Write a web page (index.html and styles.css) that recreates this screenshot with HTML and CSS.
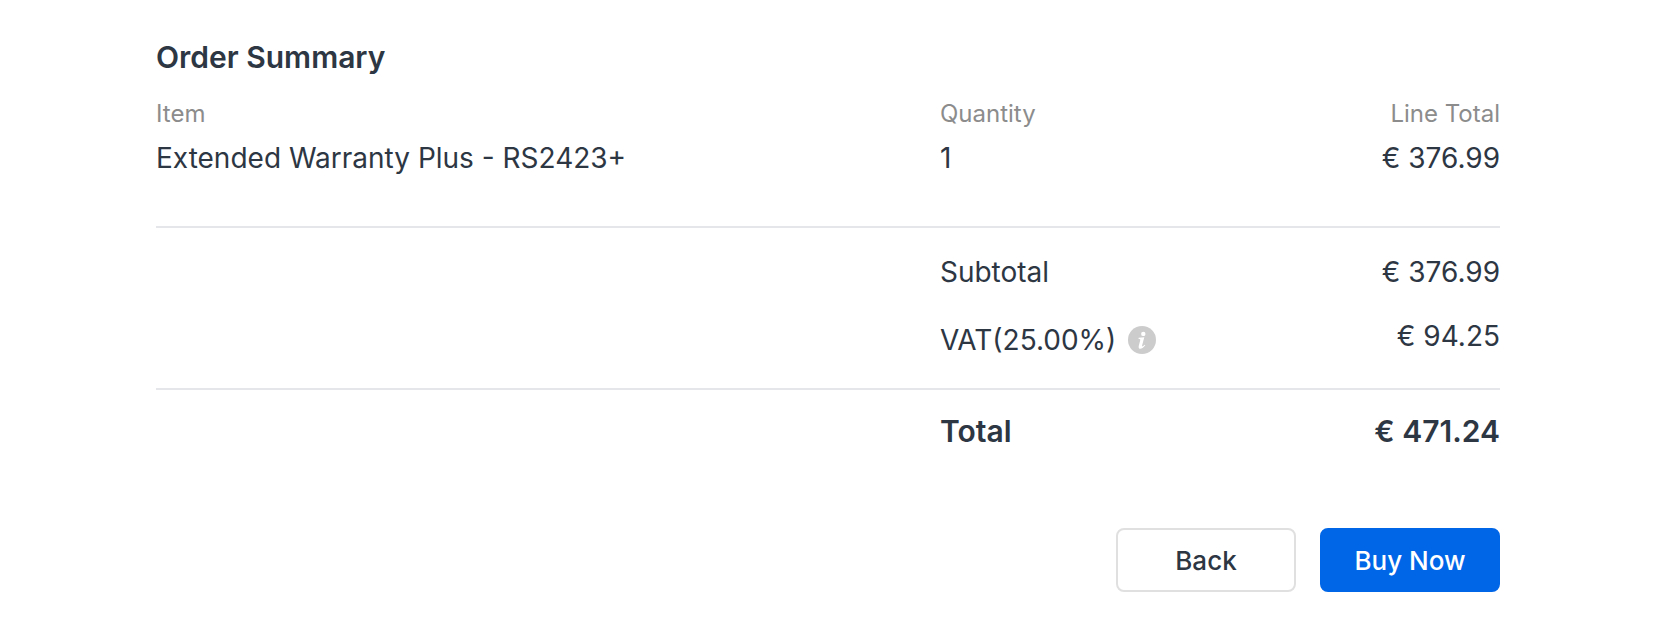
FILE: index.html
```html
<!DOCTYPE html>
<html lang="en">

<head>
    <meta charset="UTF-8">
    <meta name="viewport" content="width=device-width, initial-scale=1.0">
    <title>Order Summary</title>
    <link rel="stylesheet" href="styles.css">
</head>

<body>

    <main class="container">
        <h1>Order Summary</h1>
        <table class="summary">
            <colgroup>
                <col class="col-item">
                <col class="col-quantity">
                <col class="col-total">
            </colgroup>
            <thead>
                <tr>
                    <th scope="col">Item</th>
                    <th scope="col">Quantity</th>
                    <th scope="col" class="amount">Line Total</th>
                </tr>
            </thead>
            <tbody>
                <tr class="line-item">
                    <td>Extended Warranty Plus - RS2423+</td>
                    <td>1</td>
                    <td class="amount">€ 376.99</td>
                </tr>
            </tbody>
            <tbody class="charges">
                <tr class="subtotal">
                    <td></td>
                    <td>Subtotal</td>
                    <td class="amount">€ 376.99</td>
                </tr>
                <tr class="vat">
                    <td></td>
                    <td>
                        <div class="vat-label">
                            <span>VAT(25.00%)</span>
                            <button type="button" class="info" aria-label="VAT information">
                                <svg viewBox="0 0 28 28" aria-hidden="true">
                                    <circle cx="14" cy="14" r="14" fill="#ccc"/>
                                    <circle cx="15.300" cy="7.900" r="2.200" fill="#fff"/>
                                    <path d="M10.700 11.800L16.300 11.200L14.100 19.600C13.800 20.900 14.700 20.600 16.600 18.700L17.300 19.300C13.500 24.300 9.800 23.500 10.800 19.700L12.200 14.300C12.500 13.200 12.200 12.900 10.500 12.900Z" fill="#fff"/>
                                </svg>
                            </button>
                        </div>
                    </td>
                    <td class="amount">€ 94.25</td>
                </tr>
            </tbody>
            <tfoot>
                <tr>
                    <td></td>
                    <td>Total</td>
                    <td class="amount">€ 471.24</td>
                </tr>
            </tfoot>
        </table>
        <div class="actions">
            <button type="button" class="btn">Back</button>
            <button type="submit" class="btn btn-primary">Buy Now</button>
        </div>
    </main>

</body>

</html>
```

FILE: styles.css
```css
/* Basic Reset */
* {
    margin: 0;
    padding: 0;
    box-sizing: border-box;
}

body {
    font-family: 'Inter', sans-serif;
    font-size: 28px;
    line-height: 40px;
    color: #2d3643;
    background-color: #fff;
}

.container {
    padding: 36px 170px 42px 156px;
}

h1 {
    font-size: 30px;
    line-height: 42px;
    font-weight: 600;
    margin-bottom: 16px;
}

/* Order table */
.summary {
    width: 100%;
    table-layout: fixed;
    border-collapse: collapse;
}

.col-item {
    width: 58.33%;
}

.col-quantity {
    width: 25%;
}

th {
    font-size: 24px;
    line-height: 40px;
    font-weight: 400;
    color: #8c8c8c;
    text-align: left;
}

td {
    vertical-align: top;
}

.summary .amount {
    text-align: right;
}

.line-item td {
    padding: 4px 0 48px;
}

.charges {
    border-top: 2px solid #e5e6ea;
    border-bottom: 2px solid #e5e6ea;
}

.subtotal td {
    padding: 24px 0 12px;
}

.vat td {
    padding: 12px 0 28px;
}

.vat-label {
    display: flex;
    align-items: center;
    gap: 12px;
    padding-top: 4px;
}

.info {
    width: 28px;
    height: 28px;
    border: none;
    background: none;
    cursor: pointer;
}

.info svg {
    display: block;
}

tfoot td {
    font-size: 30px;
    line-height: 42px;
    font-weight: 600;
    padding-top: 20px;
}

/* Buttons */
.actions {
    display: flex;
    justify-content: flex-end;
    gap: 24px;
    margin-top: 76px;
}

.btn {
    width: 180px;
    height: 64px;
    border: 2px solid #e0e0e0;
    border-radius: 8px;
    background-color: #fff;
    color: #2d3643;
    font-family: inherit;
    font-size: 26px;
    font-weight: 500;
    cursor: pointer;
}

.btn-primary {
    border-color: #0066e8;
    background-color: #0066e8;
    color: #fff;
}
```
